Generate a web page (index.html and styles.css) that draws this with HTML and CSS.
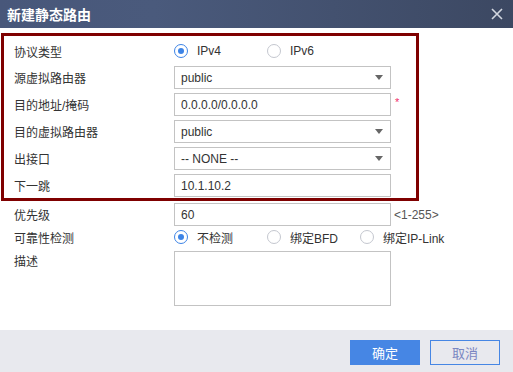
FILE: index.html
```html
<!DOCTYPE html>
<html lang="zh-CN">
<head>
  <meta charset="UTF-8" />
  <title>新建静态路由</title>
  <link rel="stylesheet" href="styles.css">
</head>
<body>
  <div class="dialog">
    <div class="dialog-header">
      <span class="dialog-title">新建静态路由</span>
      <svg class="close" width="12" height="12" viewBox="0 0 12 12">
        <path d="M1 1 L11 11 M11 1 L1 11" stroke="#d3d7e0" stroke-width="1.6" fill="none"/>
      </svg>
    </div>

    <div class="dialog-body">
      <!-- Highlighted section -->
      <div class="highlight">
        <div class="row radio-row">
          <label class="label">协议类型</label>
          <div class="radio-group">
            <span class="radio-option"><span class="radio checked"></span>IPv4</span>
            <span class="radio-option"><span class="radio"></span>IPv6</span>
          </div>
        </div>
        <div class="row">
          <label class="label">源虚拟路由器</label>
          <div class="select">public<span class="arrow"></span></div>
        </div>
        <div class="row">
          <label class="label">目的地址/掩码</label>
          <input class="input" type="text" value="0.0.0.0/0.0.0.0">
          <span class="required">*</span>
        </div>
        <div class="row">
          <label class="label">目的虚拟路由器</label>
          <div class="select">public<span class="arrow"></span></div>
        </div>
        <div class="row">
          <label class="label">出接口</label>
          <div class="select">-- NONE --<span class="arrow"></span></div>
        </div>
        <div class="row">
          <label class="label">下一跳</label>
          <input class="input" type="text" value="10.1.10.2">
        </div>
      </div>

      <div class="plain">
        <div class="row">
          <label class="label">优先级</label>
          <input class="input" type="text" value="60">
          <span class="hint">&lt;1-255&gt;</span>
        </div>
        <div class="row radio-row">
          <label class="label">可靠性检测</label>
          <div class="radio-group">
            <span class="radio-option"><span class="radio checked"></span>不检测</span>
            <span class="radio-option"><span class="radio"></span>绑定BFD</span>
            <span class="radio-option"><span class="radio"></span>绑定IP-Link</span>
          </div>
        </div>
        <div class="row top">
          <label class="label">描述</label>
          <textarea class="textarea"></textarea>
        </div>
      </div>
    </div>

    <div class="dialog-footer">
      <button class="btn primary">确定</button>
      <button class="btn secondary">取消</button>
    </div>
  </div>
</body>
</html>
```

FILE: styles.css
```css
html, body {
  margin: 0;
  padding: 0;
  width: 513px;
  height: 372px;
  overflow: hidden;
  background: #FFFFFF;
  font-family: "Liberation Sans", Arial, "Noto Sans CJK SC", sans-serif;
  font-size: 12px;
  color: #333333;
}
.dialog {
  width: 100%;
  height: 100%;
  display: flex;
  flex-direction: column;
}

/* Header */
.dialog-header {
  height: 28px;
  flex-shrink: 0;
  display: flex;
  align-items: center;
  justify-content: space-between;
  padding: 0 10px 0 7px;
  background: linear-gradient(to right, #48577a, #4a5a7c 30%, #3c4862);
}
.dialog-title {
  color: #FFFFFF;
  font-size: 14px;
  font-weight: 700;
}
.close {
  display: block;
}

/* Body */
.dialog-body {
  flex: 1;
}
.highlight {
  width: 418px;
  box-sizing: border-box;
  margin: 5px 0 0 1px;
  border: 3px solid #7f0000;
  padding: 4px 0 1px 10px;
  display: flex;
  flex-direction: column;
  gap: 4px;
}
.plain {
  padding: 2px 0 0 14px;
  display: flex;
  flex-direction: column;
}
.row {
  display: flex;
  align-items: center;
  height: 23px;
}
.row.radio-row {
  height: 22px;
}
.row.top {
  align-items: flex-start;
  height: auto;
  margin-top: 3px;
}
.label {
  width: 160px;
  flex-shrink: 0;
}
.row.top .label {
  padding-top: 1px;
}

/* Controls */
.input, .select, .textarea {
  width: 217px;
  box-sizing: border-box;
  border: 1px solid #c3c3c3;
  background: #FFFFFF;
  font-family: inherit;
  font-size: 12px;
  color: #333333;
  padding: 0 6px;
  margin: 0;
  outline: none;
}
.input, .select {
  height: 23px;
}
.select {
  display: flex;
  align-items: center;
  justify-content: space-between;
  padding-right: 7px;
}
.arrow {
  width: 0;
  height: 0;
  border-left: 4px solid transparent;
  border-right: 4px solid transparent;
  border-top: 5px solid #666666;
}
.textarea {
  height: 55px;
  resize: none;
  display: block;
}
.required {
  color: #f0306a;
  margin-left: 4px;
  font-size: 11px;
  align-self: flex-start;
  margin-top: 3px;
}
.hint {
  margin-left: 3px;
  color: #555555;
}

/* Radios */
.radio-group {
  display: flex;
}
.radio-option {
  width: 93px;
  display: flex;
  align-items: center;
  gap: 9px;
}
.radio {
  width: 14px;
  height: 14px;
  box-sizing: border-box;
  border-radius: 50%;
  border: 1px solid #c4c7cf;
  position: relative;
}
.radio.checked {
  border-color: #3d84e6;
}
.radio.checked::after {
  content: '';
  position: absolute;
  top: 3px;
  left: 3px;
  width: 6px;
  height: 6px;
  border-radius: 50%;
  background: #3d84e6;
}

/* Footer */
.dialog-footer {
  height: 42px;
  flex-shrink: 0;
  background: #e8e9ee;
  display: flex;
  justify-content: flex-end;
  align-items: flex-start;
  gap: 10px;
  padding: 10px 13px 0 0;
  box-sizing: border-box;
}
.btn {
  width: 70px;
  height: 25px;
  font-family: inherit;
  font-size: 13px;
  cursor: pointer;
  padding: 0;
}
.primary {
  background: #4686e4;
  border: none;
  color: #FFFFFF;
}
.secondary {
  background: transparent;
  border: 1px solid #4686e4;
  color: #7a86c2;
}
```
